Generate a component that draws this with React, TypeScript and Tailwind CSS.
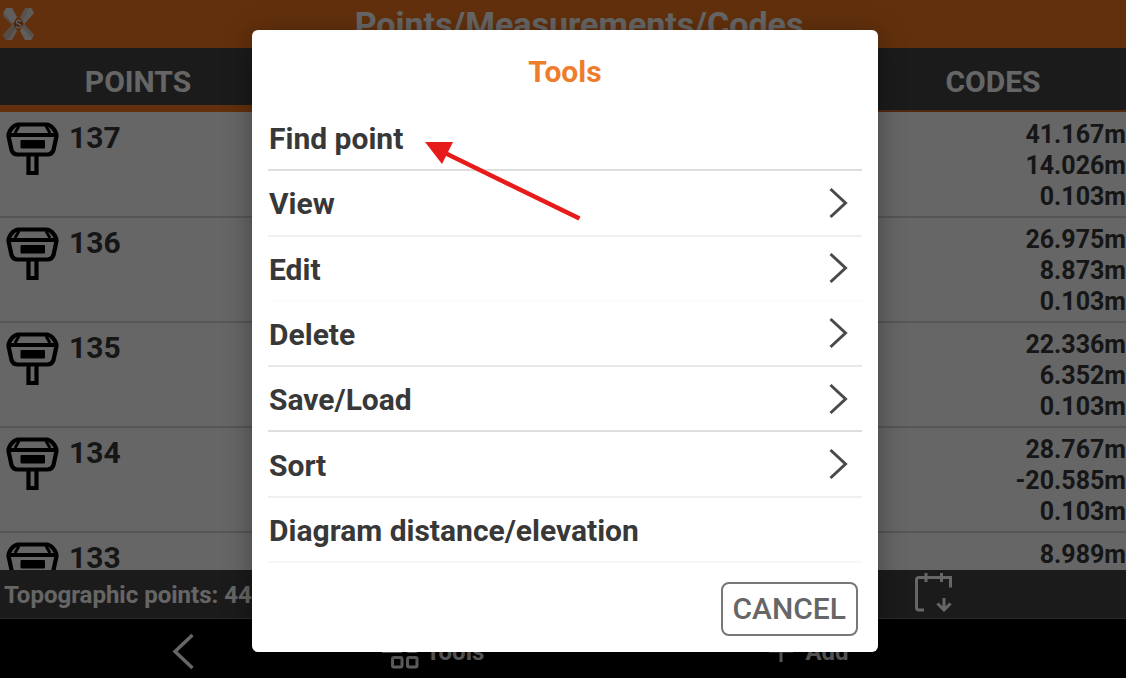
import React from "react";

type Point = { id: string; values: string[] };
type MenuItem = { label: string; submenu: boolean; line: string };

const points: Point[] = [
  { id: "137", values: ["41.167m", "14.026m", "0.103m"] },
  { id: "136", values: ["26.975m", "8.873m", "0.103m"] },
  { id: "135", values: ["22.336m", "6.352m", "0.103m"] },
  { id: "134", values: ["28.767m", "-20.585m", "0.103m"] },
  { id: "133", values: ["8.989m"] },
];

const menu: MenuItem[] = [
  { label: "Find point", submenu: false, line: "border-[#dedede]" },
  { label: "View", submenu: true, line: "border-[#f0f0f0]" },
  { label: "Edit", submenu: true, line: "border-[#fcfcfc]" },
  { label: "Delete", submenu: true, line: "border-[#e8e8e8]" },
  { label: "Save/Load", submenu: true, line: "border-[#dedede]" },
  { label: "Sort", submenu: true, line: "border-[#f0f0f0]" },
  { label: "Diagram distance/elevation", submenu: false, line: "border-[#f7f7f7]" },
];

function Logo() {
  return (
    <svg className="h-8 w-8" viewBox="0 0 32 32" aria-hidden="true">
      <path d="M3 0H9L14 9L10 16L0 5Z" fill="#f0ebe6" />
      <path d="M0 5L10 16L9 17L1 9Z" fill="#d8c9bd" />
      <path d="M22 0H28L31 5L21 16L17 9Z" fill="#dccbbd" />
      <path d="M26 0H28L31 5L21 16L20 13Z" fill="#eee5dd" />
      <path d="M10 16L14 23L9 32H3L0 27Z" fill="#e8dcd2" />
      <path d="M10 16L13 21L4 32H3L0 27Z" fill="#d4bfaf" />
      <path d="M21 16L31 27L28 32H22L17 23Z" fill="#f0ebe6" />
      <path d="M21 16L31 27L29 30L19 19Z" fill="#d8cabf" />
      <circle cx="15.5" cy="16" r="4.5" fill="#b8602a" />
      <path d="M18 13.5C17 12 13.3 12 13.3 14C13.3 16.3 18 15.3 18 18C18 20 14 20.2 13 18.4" fill="none" stroke="#f4e8df" strokeWidth="1.4" />
    </svg>
  );
}

function ReceiverIcon() {
  return (
    <svg className="h-[54px] w-[54px] shrink-0" viewBox="0 0 54 54" aria-hidden="true">
      <g fill="none" stroke="#000" strokeWidth="4.2" strokeLinejoin="round">
        <path d="M13.500 2.500H41.500C46 2.500 51.500 9 51.500 14L48.500 28C47.500 31 45.500 32.500 42.500 32.500H12.500C9.500 32.500 7.500 31 6.500 28L3.500 14C3.500 9 8.500 2.500 13.500 2.500Z" />
        <path d="M4 13H51" />
        <path d="M10 11L14 4M45 11L41 4" strokeWidth="3" />
        <path d="M23.500 34V51H31.500V34" strokeLinejoin="miter" />
      </g>
      <rect x="15.500" y="18" width="24.500" height="8.500" rx="1" />
    </svg>
  );
}

export default function App() {
  return (
    <div className="relative flex h-screen flex-col overflow-hidden bg-white font-[Roboto,sans-serif] font-bold text-[#383838]">
      <header className="relative flex h-12 shrink-0 items-center justify-center bg-[#f47820] text-white">
        <div className="absolute left-[3px] top-2">
          <Logo />
        </div>
        <h1 className="pl-8 text-[34px] leading-12">Points/Measurements/Codes</h1>
      </header>

      <nav className="grid h-16 shrink-0 grid-cols-[276fr_584fr_266fr] bg-[#444] text-[30px] text-white">
        <button className="border-b-[7px] border-[#f47820] pt-2.5">POINTS</button>
        <button aria-label="Measurements" className="border-b-2 border-[#c9682a] pt-1" />
        <button className="border-b-2 border-[#c9682a] pt-1">CODES</button>
      </nav>

      <main className="min-h-0 flex-1 overflow-hidden pt-px">
        {points.map((p) => (
          <article key={p.id} className="flex h-[105px] justify-between border-b-2 border-[#d6d6d6] pb-1 pt-1.5">
            <div className="flex gap-2.5 pl-[5px] pt-[3px]">
              <ReceiverIcon />
              <h2 className="text-[30px] leading-8">{p.id}</h2>
            </div>
            <div className="grid grid-rows-3 text-right text-[25px] leading-[31px]">
              {p.values.map((v, i) => (
                <span key={i}>{v}</span>
              ))}
            </div>
          </article>
        ))}
      </main>

      <div className="flex h-[49px] shrink-0 items-center justify-between border-b border-[#6a6a6a] bg-[#444] text-2xl text-white">
        <p className="pl-1 pt-0.5">Topographic points: 44</p>
        <button aria-label="Calendar" className="mr-[173px] pb-1">
          <svg className="h-10 w-10" viewBox="0 0 40 40" fill="none" stroke="#fff" strokeWidth="3" aria-hidden="true">
            <path d="M11 38H6Q3.500 38 3.500 35.500V8Q3.500 5.500 6 5.500H37.500V15.500" />
            <path d="M13 1V10M28.500 1V10M31 26V37M24.500 31.500L31 38L37.500 31.500" />
          </svg>
        </button>
      </div>

      <footer className="grid h-[59px] shrink-0 grid-cols-[366fr_134fr_626fr] bg-black pt-1.5 text-2xl text-white">
        <button aria-label="Back" className="flex items-center justify-center">
          <svg className="h-9 w-6" viewBox="0 0 24 36" fill="none" stroke="#fff" strokeWidth="3.500" aria-hidden="true">
            <path d="M21.500 1L4 17.500L21.500 34" />
          </svg>
        </button>
        <button className="flex items-center justify-center gap-2">
          <svg className="h-9 w-9 overflow-visible" viewBox="0 0 36 36" fill="none" stroke="#fff" strokeWidth="3" aria-hidden="true">
            <path d="M0 17.500H20" />
            <rect x="25.500" y="8" width="9.500" height="9.500" rx="1.500" />
            <rect x="10.500" y="23.500" width="9.500" height="9.500" rx="1.500" />
            <rect x="25.500" y="23.500" width="9.500" height="9.500" rx="1.500" />
          </svg>
          Tools
        </button>
        <button className="flex items-center justify-center gap-3 pr-2">
          <svg className="h-6 w-6" viewBox="0 0 24 24" fill="none" stroke="#fff" strokeWidth="3" aria-hidden="true">
            <path d="M0 11H24M12 0V22" />
          </svg>
          Add
        </button>
      </footer>

      <div className="absolute inset-0 flex items-center justify-center bg-black/60 pl-1 pt-1">
        <section
          role="dialog"
          aria-modal="true"
          aria-labelledby="dialog-title"
          className="relative w-[626px] rounded-md bg-white px-4 shadow-[0_6px_28px_rgba(0,0,0,0.35)]"
        >
          <h2 id="dialog-title" className="h-[76px] pt-6 text-center text-[30px] leading-9 text-[#ee7d2b]">
            Tools
          </h2>
          <ul className="grid h-[457px] grid-rows-7">
            {menu.map((m) => (
              <li key={m.label} className={`border-b-2 ${m.line}`}>
                <button className="flex h-full w-full items-center justify-between pl-px pr-3.5 text-left text-[30px]">
                  <span className="pt-0.5">{m.label}</span>
                  {m.submenu && (
                    <svg className="h-8 w-5" viewBox="0 0 20 32" fill="none" stroke="#4a4a4a" strokeWidth="3" aria-hidden="true">
                      <path d="M2.500 2L17.500 16L2.500 30" />
                    </svg>
                  )}
                </button>
              </li>
            ))}
          </ul>
          <div className="flex h-[89px] items-start justify-end pr-1 pt-[19px]">
            <button className="rounded-lg border-2 border-[#777] px-2.5 text-[30px] font-medium leading-[50px] text-[#666]">
              CANCEL
            </button>
          </div>
          <svg
            className="pointer-events-none absolute left-[173px] top-28 h-[80px] w-[158px]"
            viewBox="0 0 158 80"
            aria-hidden="true"
          >
            <path d="M20 11L154.500 76.500" stroke="#e81b1b" strokeWidth="4.500" />
            <path d="M0 0H28L17 22Z" fill="#e81b1b" />
          </svg>
        </section>
      </div>
    </div>
  );
}
